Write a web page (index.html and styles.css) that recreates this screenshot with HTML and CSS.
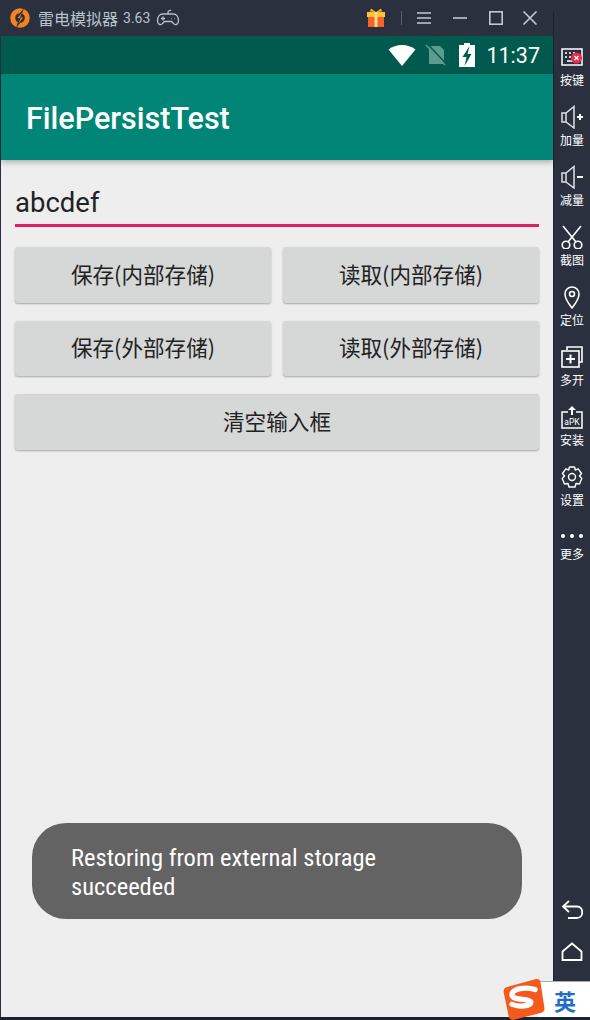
FILE: index.html
```html
<!DOCTYPE html>
<html lang="zh-CN">
<head>
    <meta charset="UTF-8">
    <title>FilePersistTest</title>
    <link rel="stylesheet" href="styles.css">
</head>
<body>
    <div class="window">
        <!-- barre de titre de l'emulateur -->
        <header class="titlebar">
            <svg class="logo" viewBox="0 0 20 20" width="20" height="20">
                <circle cx="10" cy="10" r="7.300" fill="none" stroke="#f6821f" stroke-width="5"/>
                <path d="M14 0L5.500 10.500H9L6 20L15 9H11Z" fill="#2a303e"/>
                <path d="M12 4.500L7.500 10H10.700L8.500 15.500L13 9.500H9.800Z" fill="#f6821f"/>
            </svg>
            <span class="app-name">雷电模拟器</span>
            <span class="app-version">3.63</span>
            <svg class="gamepad" viewBox="0 0 24 18" width="24" height="18" fill="none" stroke="#b9c0ca" stroke-width="1.300">
                <path d="M7 5H17C20.500 5 22.500 8 22.500 11.500C22.500 15 20 16.500 18 15L15.500 12.500H8.500L6 15C4 16.500 1.500 15 1.500 11.500C1.500 8 3.500 5 7 5Z"/>
                <path d="M12 5V3C12 1.500 14 2 15 1"/>
                <path d="M5 9.500H9M7 7.500V11.500M15.500 9.500H16M18.500 9.500H19"/>
            </svg>
            <div class="titlebar-right">
                <svg class="gift" viewBox="0 0 20 20" width="20" height="20">
                    <rect x="1" y="4" width="18" height="5" fill="#fbc531"/>
                    <rect x="2" y="9" width="16" height="10" fill="#f4632c"/>
                    <rect x="8.500" y="4" width="3" height="15" fill="#ffd98a"/>
                    <path d="M10 4L5 0.500L4 3.500ZM10 4L15 0.500L16 3.500Z" fill="#f9b233"/>
                </svg>
                <span class="sep"></span>
                <svg class="win-btn" viewBox="0 0 16 14" width="16" height="14" stroke="#c3c8cf" stroke-width="1.600" fill="none"><path d="M1 2H15M1 7H15M1 12H15"/></svg>
                <svg class="win-btn" viewBox="0 0 16 14" width="16" height="14" stroke="#c3c8cf" stroke-width="1.600" fill="none"><path d="M1 7H15"/></svg>
                <svg class="win-btn" viewBox="0 0 16 14" width="16" height="14" stroke="#c3c8cf" stroke-width="1.600" fill="none"><rect x="1.800" y="0.800" width="12.400" height="12.400"/></svg>
                <svg class="win-btn" viewBox="0 0 16 14" width="16" height="14" stroke="#c3c8cf" stroke-width="1.600" fill="none"><path d="M1.500 0.500L14.500 13.500M14.500 0.500L1.500 13.500"/></svg>
            </div>
        </header>

        <div class="main">
            <main class="phone">
                <div class="statusbar">
                    <svg class="wifi" viewBox="0 0 28 22" width="28" height="22"><path d="M14 22L0.500 5.500C8 -0.500 20 -0.500 27.500 5.500Z" fill="#fff"/></svg>
                    <svg class="sim" viewBox="0 0 22 22" width="22" height="22">
                        <path d="M4 2H15L19 6V20H4Z" fill="#5d9b8f"/>
                        <path d="M1 1L20 21" stroke="#5d9b8f" stroke-width="1.500"/>
                        <path d="M2.500 0L21.500 20" stroke="#005b4e" stroke-width="1.500"/>
                    </svg>
                    <svg class="battery" viewBox="0 0 16 24" width="16" height="24">
                        <path d="M5 0H11V2H16V24H0V2H5Z" fill="#fff"/>
                        <path d="M10.500 3L3.500 14H7.500L5.500 23L12.500 11H8.500Z" fill="#005b4e"/>
                    </svg>
                    <span class="clock">11:37</span>
                </div>
                <div class="appbar">FilePersistTest</div>
                <div class="content">
                    <div class="edit-text">abcdef</div>
                    <div class="btn-row">
                        <button class="btn">保存(内部存储)</button>
                        <button class="btn">读取(内部存储)</button>
                    </div>
                    <div class="btn-row">
                        <button class="btn">保存(外部存储)</button>
                        <button class="btn">读取(外部存储)</button>
                    </div>
                    <div class="btn-row">
                        <button class="btn">清空输入框</button>
                    </div>
                </div>
                <div class="toast">Restoring from external storage<br>succeeded</div>
            </main>

            <aside class="sidebar">
                <div class="side-item">
                    <svg viewBox="0 0 24 24" width="24" height="24">
                        <rect x="2" y="4" width="20" height="16" fill="none" stroke="#fff" stroke-width="1.500"/>
                        <path d="M5 8H7M9 8H11M13 8H15M5 12H7M9 12H11M7 16H15" stroke="#fff" stroke-width="1.500"/>
                        <circle cx="16.500" cy="13" r="5.500" fill="#ee2b47"/>
                        <path d="M14.500 11L18.500 15M18.500 11L14.500 15" stroke="#fff" stroke-width="1.300"/>
                    </svg>
                    <span>按键</span>
                </div>
                <div class="side-item">
                    <svg viewBox="0 0 24 24" width="24" height="24" fill="none" stroke="#dfe2e6" stroke-width="1.500">
                        <path d="M2 8H6V17H2ZM6 8L14 1.500V23L6 17"/>
                        <path d="M17 12H23M20 9V15" stroke="#fff" stroke-width="2"/>
                    </svg>
                    <span>加量</span>
                </div>
                <div class="side-item">
                    <svg viewBox="0 0 24 24" width="24" height="24" fill="none" stroke="#dfe2e6" stroke-width="1.500">
                        <path d="M2 8H6V17H2ZM6 8L14 1.500V23L6 17"/>
                        <path d="M17 12H23" stroke="#fff" stroke-width="2"/>
                    </svg>
                    <span>减量</span>
                </div>
                <div class="side-item">
                    <svg viewBox="0 0 24 24" width="24" height="24" fill="none" stroke="#fff" stroke-width="1.600">
                        <path d="M3 1L16 17M21 1L8 17"/>
                        <circle cx="6" cy="20" r="3.800"/>
                        <circle cx="18" cy="20" r="3.800"/>
                    </svg>
                    <span>截图</span>
                </div>
                <div class="side-item">
                    <svg viewBox="0 0 24 24" width="24" height="24" fill="none" stroke="#fff" stroke-width="1.600">
                        <path d="M12 23C8 18 5 14 5 9A7 7 0 0 1 19 9C19 14 16 18 12 23Z"/>
                        <circle cx="12" cy="9" r="2.500"/>
                    </svg>
                    <span>定位</span>
                </div>
                <div class="side-item">
                    <svg viewBox="0 0 24 24" width="24" height="24" fill="none" stroke="#fff" stroke-width="1.600">
                        <path d="M7 5V2H22V17H19"/>
                        <rect x="2" y="6" width="17" height="16"/>
                        <path d="M6 14H15M10.500 9.500V18.500" stroke-width="2"/>
                    </svg>
                    <span>多开</span>
                </div>
                <div class="side-item">
                    <svg viewBox="0 0 24 24" width="24" height="24" fill="none" stroke="#fff" stroke-width="1.500">
                        <path d="M8 7H2V23H22V7H16"/>
                        <path d="M12 1L8 5H11V10H13V5H16Z" fill="#fff" stroke="none"/>
                        <text x="12" y="19.500" class="apk-text">aPK</text>
                    </svg>
                    <span>安装</span>
                </div>
                <div class="side-item">
                    <svg viewBox="0 0 24 24" width="24" height="24" fill="none" stroke="#fff" stroke-width="1.400">
                        <path d="M9.500 2H14.500L15.300 5L18.200 3.800L21.500 8.500L19.500 11L21.800 13.500L19.500 19L16 18.500L15 22H9L8 18.500L4.500 19L2.200 13.500L4.500 11L2.500 8.500L5.800 3.800L8.700 5Z" stroke-linejoin="round"/>
                        <circle cx="12" cy="12" r="3.500"/>
                    </svg>
                    <span>设置</span>
                </div>
                <div class="side-item side-more">
                    <svg viewBox="0 0 24 6" width="24" height="6" fill="#fff">
                        <circle cx="3" cy="3" r="2"/>
                        <circle cx="12" cy="3" r="2"/>
                        <circle cx="21" cy="3" r="2"/>
                    </svg>
                    <span>更多</span>
                </div>
                <div class="side-bottom">
                    <svg viewBox="0 0 22 20" width="22" height="20" fill="none" stroke="#fff" stroke-width="1.800">
                        <path d="M8 1L2 6.500L8 12M2 6.500H16C23 6.500 23 18 16 18H7"/>
                    </svg>
                    <svg viewBox="0 0 22 20" width="22" height="20" fill="none" stroke="#fff" stroke-width="1.800">
                        <path d="M1.500 9.500L11 1.500L20.500 9.500V18H1.500Z"/>
                    </svg>
                </div>
            </aside>
        </div>

        <div class="ime">
            <svg class="ime-logo" viewBox="0 0 40 40" width="43" height="42">
                <path d="M3 9L32 1Q35 0.500 36 3L40 29Q40 32 37 33L10 40Q7 40 6 37L1 13Q1 10 3 9Z" fill="#f4591e"/>
                <path d="M31 11C22 8 9 10 9 16C9 22 26 19 27 23C27 27 15 28 9 25" fill="none" stroke="#fff" stroke-width="5" stroke-linecap="round"/>
            </svg>
            <span class="ime-text">英</span>
        </div>
    </div>
</body>
</html>
```

FILE: styles.css
```css
* {
    box-sizing: border-box;
    margin: 0;
    padding: 0;
}

body {
    width: 590px;
    height: 1020px;
    overflow: hidden;
    background-color: #1c2330;
    font-family: 'Roboto', 'Noto Sans CJK SC', sans-serif;
}

.window {
    position: relative;
    display: flex;
    flex-direction: column;
    width: 590px;
    height: 1017px;
    padding-left: 1px;
    background-color: #2a303e;
}

.titlebar {
    display: flex;
    align-items: center;
    height: 36px;
    flex-shrink: 0;
    padding-left: 9px;
    color: #b9c3d0;
}

.logo {
    margin-right: 8px;
}

.app-name {
    font-family: 'Noto Sans CJK SC', sans-serif;
    font-size: 16px;
}

.app-version {
    margin-left: 5px;
    font-size: 14px;
}

.gamepad {
    margin-left: 6px;
}

.titlebar-right {
    display: flex;
    align-items: center;
    margin-left: auto;
    padding-right: 52px;
}

.gift {
    margin-right: 15px;
}

.sep {
    width: 1px;
    height: 14px;
    margin-right: 14px;
    background-color: #566072;
}

.win-btn {
    margin-right: 20px;
}

.win-btn:nth-last-child(2) {
    margin-right: 18px;
}

.win-btn:last-child {
    margin-right: 0;
}

.main {
    display: flex;
    flex: 1;
    min-height: 0;
}

.phone {
    position: relative;
    display: flex;
    flex-direction: column;
    width: 552px;
    background-color: #eeeeee;
}

.statusbar {
    display: flex;
    align-items: center;
    justify-content: flex-end;
    gap: 11px;
    height: 38px;
    padding-right: 13px;
    background-color: #005b4e;
}

.sim {
    margin-left: -2px;
    margin-right: 1px;
}

.clock {
    color: #fff;
    font-size: 21.5px;
    font-weight: 400;
}

.appbar {
    display: flex;
    align-items: center;
    height: 86px;
    padding: 2px 0 0 25px;
    background-color: #008577;
    color: #fff;
    font-size: 30.5px;
    font-weight: 500;
    box-shadow: 0 2px 6px rgba(0,0,0,0.3);
}

.content {
    padding: 24px 14px 0;
}

.edit-text {
    height: 43px;
    border-bottom: 3px solid #e01e64;
    color: #222;
    font-size: 27.5px;
    line-height: 38px;
    margin-bottom: 20px;
}

.btn-row {
    display: flex;
    gap: 12px;
    margin-bottom: 18px;
}

.btn {
    flex: 1;
    height: 55.5px;
    padding-bottom: 3px;
    border: none;
    border-radius: 3px;
    background-color: #d6d7d7;
    color: #222;
    font-family: 'Noto Sans CJK SC', sans-serif;
    font-size: 21.6px;
    box-shadow: 0 1px 2px rgba(0,0,0,0.3);
}

.toast {
    position: absolute;
    left: 31px;
    top: 787px;
    width: 490px;
    height: 96px;
    padding: 20px 39px 0;
    border-radius: 34px;
    background-color: #636363;
    color: #fff;
    font-size: 24.5px;
    font-stretch: condensed;
    line-height: 29px;
}

.sidebar {
    display: flex;
    flex-direction: column;
    width: 37px;
    height: 969px;
    border-left: 1px solid #1c2330;
    margin-top: -24px;
    background-color: #2a303e;
}

.side-item {
    display: flex;
    flex-direction: column;
    align-items: center;
    flex-shrink: 0;
    gap: 3px;
    height: 60px;
    color: #fff;
    font-family: 'Noto Sans CJK SC', sans-serif;
    font-size: 12px;
    line-height: 15px;
}

.side-item:first-child {
    margin-top: 33px;
}

.side-more {
    height: auto;
    padding-top: 8px;
    gap: 7px;
}

.apk-text {
    fill: #fff;
    stroke: none;
    font-family: 'Roboto', sans-serif;
    font-size: 8.5px;
    text-anchor: middle;
}

.side-bottom {
    display: flex;
    flex-direction: column;
    align-items: center;
    gap: 22px;
    margin-top: auto;
    padding-bottom: 19px;
}

.ime {
    position: absolute;
    right: 0;
    bottom: 0;
    display: flex;
    align-items: center;
    justify-content: flex-end;
    width: 52px;
    height: 36px;
    padding-right: 14px;
    border-top: 1px solid #aaa;
    background-color: #fff;
}

.ime-logo {
    position: absolute;
    left: -36px;
    top: -4px;
}

.ime-text {
    color: #1f6fc4;
    font-family: 'Noto Sans CJK SC', sans-serif;
    font-size: 22px;
    font-weight: 700;
}
```
